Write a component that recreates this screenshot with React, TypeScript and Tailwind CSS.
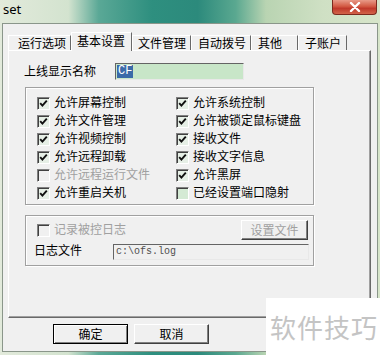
import React from 'react';

const cjk = "font-['Noto_Sans_CJK_SC',sans-serif]";

interface BoxProps {
    checked?: boolean;
    disabled?: boolean;
    tint?: boolean;
}

function CheckBox({ checked, disabled, tint }: BoxProps) {
    const bg = disabled ? 'bg-[#f0f0f0]' : tint ? 'bg-[#d4ead4]' : 'bg-[#e6efe6]';
    return (
        <span
            className={`w-[13px] h-[13px] shrink-0 flex items-center justify-center border border-t-[#808080] border-l-[#808080] border-b-white border-r-white shadow-[inset_1px_1px_0_#404040] ${bg}`}
        >
            {checked && (
                <svg width="9" height="9" viewBox="0 0 9 9">
                    <path d="M1.2 4.2 L3.4 6.6 L7.8 1.6" stroke="#101010" strokeWidth="1.9" fill="none" />
                </svg>
            )}
        </span>
    );
}

const leftItems = [
    { label: '允许屏幕控制', checked: true },
    { label: '允许文件管理', checked: true },
    { label: '允许视频控制', checked: true },
    { label: '允许远程卸载', checked: true },
    { label: '允许远程运行文件', checked: false, disabled: true },
    { label: '允许重启关机', checked: true },
];

const rightItems = [
    { label: '允许系统控制', checked: true },
    { label: '允许被锁定鼠标键盘', checked: true },
    { label: '接收文件', checked: true },
    { label: '接收文字信息', checked: true },
    { label: '允许黑屏', checked: true },
    { label: '已经设置端口隐射', checked: false, tint: true },
];

const tabs = [
    { label: '运行选项', w: 'w-[63px]', pl: 'pl-[9px]' },
    { label: '基本设置', w: 'w-[61px]', pl: 'pl-[5px]', active: true },
    { label: '文件管理', w: 'w-[59px]', pl: 'pl-[5px]' },
    { label: '自动拨号', w: 'w-[60px]', pl: 'pl-[6px]' },
    { label: '其他', w: 'w-[47px]', pl: 'pl-[6px]' },
    { label: '子账户', w: 'w-[49px]', pl: 'pl-[6px]' },
];

function Row({ label, checked, disabled, tint }: BoxProps & { label: string }) {
    return (
        <div className="h-[18px] flex items-center gap-[4px]">
            <CheckBox checked={checked} disabled={disabled} tint={tint} />
            <span className={`text-[12px] leading-none -mt-[3px] ${disabled ? 'text-[#a0a0a0]' : 'text-black'}`}>{label}</span>
        </div>
    );
}

export default function App() {
    return (
        <div
            className={`relative w-[380px] h-[355px] overflow-hidden flex flex-col bg-[linear-gradient(90deg,#e2eadb_0%,#d3e3cf_18%,#5aa896_26%,#2e8f7f_40%,#2c8a7c_52%,#5aa890_62%,#b9d4b2_70%,#cfe0c4_85%,#d7e5ca_100%)] ${cjk}`}
        >
            {/* Title bar */}
            <div className="h-[23px] shrink-0 flex items-start justify-between">
                <span className="pl-[3px] pt-[1px] text-[13px] leading-[16px] text-black font-['Noto_Sans',sans-serif]">set</span>
                <div className="mr-[3px] w-[45px] h-[15px] rounded-b-[4px] border border-t-0 border-[#7c2a1e] bg-[linear-gradient(180deg,#e89a88_0%,#d35a44_45%,#c0392b_60%,#d2644a_100%)] flex items-center justify-center">
                    <svg width="12" height="10" viewBox="0 0 12 10">
                        <path d="M2 1 L10 9 M10 1 L2 9" stroke="#fff" strokeWidth="2.4" strokeLinecap="round" />
                    </svg>
                </div>
            </div>

            {/* Dialog body */}
            <div className="mx-[2px] h-[329px] shrink-0 border border-[#8a968a] bg-[#f0f0f0] flex flex-col">
                {/* Tabs */}
                <div className="ml-[5px] mt-[8px] h-[18px] flex items-end">
                    {tabs.map(t => (
                        <div
                            key={t.label}
                            className={`${t.w} ${t.pl} flex items-center border-l border-t border-r border-l-white border-t-white border-r-[#696969] bg-[#f0f0f0] text-[12px] text-black leading-none ${
                                t.active ? 'h-[19px] -mb-[1px] relative z-10 pb-[2px]' : 'h-[15px] pb-[1px]'
                            }`}
                        >
                            {t.label}
                        </div>
                    ))}
                </div>

                {/* Tab panel */}
                <div className="ml-[5px] w-[363px] h-[268px] border border-l-white border-t-white border-r-[#696969] border-b-[#696969] shadow-[inset_-1px_-1px_0_#a0a0a0] pt-[12px] pl-[15px]">
                    <div className="flex items-center h-[17px]">
                        <span className="w-[91px] text-[12px] leading-none text-black -mt-[2px]">上线显示名称</span>
                        <div className="w-[129px] h-[17px] border border-t-[#646464] border-l-[#646464] border-b-[#e8e8e8] border-r-[#e8e8e8] bg-[#c8e6c8] flex items-center pl-[1px]">
                            <span className="bg-[#3b6aa8] text-white text-[12px] leading-[13px] px-[1px] font-['Liberation_Mono',monospace]">CF</span>
                        </div>
                    </div>

                    {/* Permissions group */}
                    <div className="mt-[7px] ml-[1px] w-[289px] h-[118px] border border-[#a0a0a0] shadow-[inset_1px_1px_0_#fff,1px_1px_0_#fff] pt-[6px] pl-[11px] grid grid-cols-[139px_1fr]">
                        <div className="flex flex-col">
                            {leftItems.map(i => (
                                <Row key={i.label} {...i} />
                            ))}
                        </div>
                        <div className="flex flex-col">
                            {rightItems.map(i => (
                                <Row key={i.label} {...i} />
                            ))}
                        </div>
                    </div>

                    {/* Log group */}
                    <div className="mt-[10px] ml-[1px] w-[289px] h-[51px] border border-[#a0a0a0] shadow-[inset_1px_1px_0_#fff,1px_1px_0_#fff] pt-[4px]">
                        <div className="flex items-center justify-between h-[20px] pl-[11px] pr-[5px]">
                            <div className="flex items-center gap-[4px]">
                                <CheckBox disabled />
                                <span className="text-[12px] leading-none text-[#a0a0a0] -mt-[2px]">记录被控日志</span>
                            </div>
                            <div className="w-[67px] h-[20px] border border-t-white border-l-white border-b-[#404040] border-r-[#404040] shadow-[inset_-1px_-1px_0_#808080] flex items-center justify-center text-[12px] leading-none text-[#a0a0a0]">
                                设置文件
                            </div>
                        </div>
                        <div className="flex items-center h-[16px] mt-[4px] pl-[8px]">
                            <span className="w-[79px] text-[12px] leading-none text-black -mt-[4px]">日志文件</span>
                            <div className="w-[196px] h-[16px] border border-t-[#646464] border-l-[#646464] border-b-[#e8e8e8] border-r-[#e8e8e8] bg-[#f0f0f0] flex items-center pl-[2px] text-[10px] leading-none text-[#505050] font-['Liberation_Mono',monospace]">
                                c:\ofs.log
                            </div>
                        </div>
                    </div>
                </div>

                {/* Buttons */}
                <div className="mt-[6px] ml-[50px] flex gap-[6px]">
                    <div className="w-[75px] h-[20px] border border-black shadow-[inset_1px_1px_0_#fff,inset_-1px_-1px_0_#808080] flex items-center justify-center text-[12px] leading-none text-black">
                        确定
                    </div>
                    <div className="w-[75px] h-[20px] border border-t-white border-l-white border-b-[#404040] border-r-[#404040] shadow-[inset_-1px_-1px_0_#808080] flex items-center justify-center text-[12px] leading-none text-black">
                        取消
                    </div>
                </div>
            </div>

            {/* Watermark */}
            <div className="absolute left-[266px] top-[298px] w-[114px] h-[57px] bg-white flex items-center pl-[4px]">
                <span className="text-[26px] leading-none tracking-[1px] text-[#c4c4c4]">软件技巧</span>
            </div>
        </div>
    );
}
